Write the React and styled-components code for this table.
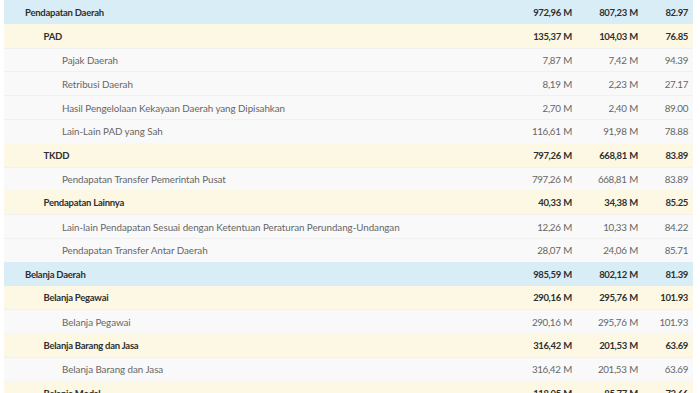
import React from "react";
import styled, { createGlobalStyle } from "styled-components";

const GlobalStyle = createGlobalStyle`
  html, body { margin: 0; padding: 0; background: #ffffff; }
  body { font-family: Lato, "Liberation Sans", sans-serif; }
`;

const Table = styled.div`
  display: flex;
  flex-direction: column;
  margin-left: 4px;
  width: 689px;
`;

const bgFor = {
  0: "#d9edf7",
  1: "#fcf8e3",
  2: "#f9f9f9",
};

const Row = styled.div`
  display: flex;
  align-items: center;
  height: 23.8px;
  box-sizing: border-box;
  background: ${(p) => bgFor[p.$level]};
  border-top: 1px solid ${(p) => (p.$level === 2 ? "#f1f1f1" : "transparent")};
  font-size: ${(p) => (p.$level === 2 ? "9.8px" : "9.5px")};
  font-weight: ${(p) => (p.$level === 2 ? 400 : 700)};
  letter-spacing: ${(p) => (p.$level === 2 ? "-0.05px" : "-0.25px")};
  color: ${(p) => (p.$level === 2 ? "#666666" : "#2f2f2f")};
`;

const Label = styled.div`
  flex: 1;
  min-width: 0;
  padding-left: ${(p) => 21 + p.$level * 18.5}px;
  white-space: nowrap;
  overflow: hidden;
`;

const Value = styled.div`
  width: ${(p) => p.$w}px;
  box-sizing: border-box;
  padding-right: 5px;
  text-align: right;
  white-space: nowrap;
  letter-spacing: -0.35px;
  word-spacing: 0.6px;
`;

const rows = [
  [0, "Pendapatan Daerah", "972,96 M", "807,23 M", "82.97"],
  [1, "PAD", "135,37 M", "104,03 M", "76.85"],
  [2, "Pajak Daerah", "7,87 M", "7,42 M", "94.39"],
  [2, "Retribusi Daerah", "8,19 M", "2,23 M", "27.17"],
  [2, "Hasil Pengelolaan Kekayaan Daerah yang Dipisahkan", "2,70 M", "2,40 M", "89.00"],
  [2, "Lain-Lain PAD yang Sah", "116,61 M", "91,98 M", "78.88"],
  [1, "TKDD", "797,26 M", "668,81 M", "83.89"],
  [2, "Pendapatan Transfer Pemerintah Pusat", "797,26 M", "668,81 M", "83.89"],
  [1, "Pendapatan Lainnya", "40,33 M", "34,38 M", "85.25"],
  [2, "Lain-lain Pendapatan Sesuai dengan Ketentuan Peraturan Perundang-Undangan", "12,26 M", "10,33 M", "84.22"],
  [2, "Pendapatan Transfer Antar Daerah", "28,07 M", "24,06 M", "85.71"],
  [0, "Belanja Daerah", "985,59 M", "802,12 M", "81.39"],
  [1, "Belanja Pegawai", "290,16 M", "295,76 M", "101.93"],
  [2, "Belanja Pegawai", "290,16 M", "295,76 M", "101.93"],
  [1, "Belanja Barang dan Jasa", "316,42 M", "201,53 M", "63.69"],
  [2, "Belanja Barang dan Jasa", "316,42 M", "201,53 M", "63.69"],
  [1, "Belanja Modal", "118,05 M", "85,77 M", "72.66"],
];

export default function App() {
  return (
    <>
      <GlobalStyle />
      <Table>
        {rows.map(([level, label, a, b, c], i) => (
          <Row key={i} $level={level}>
            <Label $level={level}>{label}</Label>
            <Value $w={90}>{a}</Value>
            <Value $w={66}>{b}</Value>
            <Value $w={50}>{c}</Value>
          </Row>
        ))}
      </Table>
    </>
  );
}
